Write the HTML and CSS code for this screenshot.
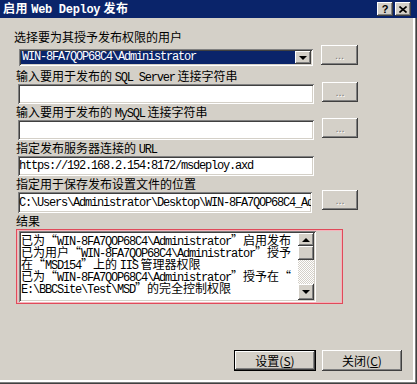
FILE: index.html
```html
<!DOCTYPE html>
<html lang="zh-Hans">

<head>
  <meta charset="UTF-8" />
  <meta name="viewport" content="width=device-width, initial-scale=1.0" />
  <title>启用 Web Deploy 发布</title>
  <link rel="stylesheet" href="styles.css">
</head>

<body>
  <div class="window">
    <div class="titlebar">
      <span class="title">启用 <span class="lat">Web Deploy</span> 发布</span>
      <div class="caption-btns">
        <span class="cap-btn help">?</span>
        <span class="cap-btn close">
          <svg width="8" height="7" viewBox="0 0 8 7"><path d="M0.5 0.5 L7.5 6.5 M7.5 0.5 L0.5 6.5" stroke="#000" stroke-width="1.6" /></svg>
        </span>
      </div>
    </div>

    <div class="content">
      <div class="field first">
        <label>选择要为其授予发布权限的用户</label>
        <div class="combo">
          <span class="combo-text lat">WIN-8FA7QOP68C4\Administrator</span>
          <span class="combo-arrow"><i></i></span>
        </div>
        <button class="browse">...</button>
      </div>

      <div class="field">
        <label>输入要用于发布的 <span class="lat">SQL Server</span> 连接字符串</label>
        <input type="text" class="box" />
        <button class="browse">...</button>
      </div>

      <div class="field">
        <label>输入要用于发布的 <span class="lat">MySQL</span> 连接字符串</label>
        <input type="text" class="box" />
        <button class="browse">...</button>
      </div>

      <div class="field">
        <label>指定发布服务器连接的 <span class="lat">URL</span></label>
        <input type="text" class="box lat" value="https://192.168.2.154:8172/msdeploy.axd" />
      </div>

      <div class="field path">
        <label>指定用于保存发布设置文件的位置</label>
        <input type="text" class="box lat" value="C:\Users\Administrator\Desktop\WIN-8FA7QOP68C4_Administrator.PublishSettings" />
        <button class="browse">...</button>
      </div>

      <div class="field result">
        <label>结果</label>
        <div class="highlight">
          <div class="log">
            <div class="log-lines">
              <div class="line">已为<span class="q qo">“</span><span class="lat">WIN-8FA7QOP68C4\Administrator</span><span class="q qc">”</span>启用发布</div>
              <div class="line">已为用户<span class="q qo">“</span><span class="lat">WIN-8FA7QOP68C4\Administrator</span><span class="q qc">”</span>授予</div>
              <div class="line">在<span class="q qo">“</span><span class="lat">MSD154</span><span class="q qc">”</span>上的 <span class="lat">IIS</span> 管理器权限</div>
              <div class="line">已为<span class="q qo">“</span><span class="lat">WIN-8FA7QOP68C4\Administrator</span><span class="q qc">”</span>授予在<span class="q qo">“</span></div>
              <div class="line"><span class="lat">E:\BBCSite\Test\MSD</span><span class="q qc">”</span>的完全控制权限</div>
            </div>
            <div class="scrollbar">
              <span class="sb-btn up"><i></i></span>
              <span class="sb-thumb"></span>
              <span class="sb-track"></span>
              <span class="sb-btn down"><i></i></span>
            </div>
          </div>
        </div>
      </div>
    </div>

    <div class="footer">
      <button class="action default">设置(<u>S</u>)</button>
      <button class="action">关闭(<u>C</u>)</button>
    </div>
  </div>
</body>

</html>
```

FILE: styles.css
```css
body {
  margin: 0;
  background-color: #d4d0c8;
  font-family: 'Noto Sans CJK SC', sans-serif;
  font-size: 12px;
  color: #000;
}

.lat {
  font-family: 'Liberation Mono', 'Noto Sans CJK SC', monospace;
  font-size: 12px;
  letter-spacing: -1.2px;
}

.window {
  width: 417px;
  height: 384px;
  box-sizing: border-box;
  overflow: hidden;
  box-shadow: inset -1px -1px #404040, inset -2px -2px #808080, inset -4px -4px #fff;
}

/* title bar */
.titlebar {
  height: 18px;
  background-color: #0a246a;
  display: flex;
  align-items: center;
  justify-content: space-between;
  padding: 0 6px 0 3px;
}

.title {
  color: #fff;
  font-weight: bold;
  font-size: 12px;
  line-height: 16px;
  white-space: nowrap;
  letter-spacing: 0.5px;
}

.title .lat {
  font-weight: bold;
  font-size: 12px;
  letter-spacing: -0.3px;
}

.caption-btns {
  display: flex;
  gap: 2px;
}

.cap-btn {
  width: 16px;
  height: 14px;
  box-sizing: border-box;
  background-color: #d4d0c8;
  box-shadow: inset -1px -1px #404040, inset 1px 1px #fff, inset -2px -2px #808080;
  display: flex;
  align-items: center;
  justify-content: center;
  font-family: 'Liberation Sans', sans-serif;
  font-weight: bold;
  font-size: 11px;
  line-height: 14px;
}

/* form */
.content {
  padding-top: 11px;
}

.field {
  display: grid;
  grid-template-columns: 296px 36px;
  column-gap: 8px;
  padding-left: 18px;
}

.field label {
  grid-column: 1 / -1;
  height: 16px;
  line-height: 16px;
  margin-left: -2px;
  white-space: nowrap;
}

.field.first {
  grid-template-columns: 294px 37px;
  padding-left: 19px;
  margin-bottom: 2px;
}

.field.first label {
  margin-left: -5px;
  height: 17px;
}

.box {
  height: 20px;
  box-sizing: border-box;
  border: none;
  margin: 0;
  padding: 0 1px;
  background: #fff;
  color: #000;
  outline: none;
  box-shadow: inset 1px 1px #808080, inset -1px -1px #fff, inset 2px 2px #404040, inset -2px -2px #d4d0c8;
}

.field.path .box {
  height: 21px;
  width: 294px;
}

.browse {
  width: 36px;
  height: 20px;
  margin: -2px 0 0 0;
  padding: 0;
  border: none;
  background-color: #d4d0c8;
  box-shadow: inset -1px -1px #404040, inset 1px 1px #fff, inset -2px -2px #808080;
  color: #808080;
  text-shadow: 1px 1px #fff;
  font-family: 'Liberation Sans', sans-serif;
  font-size: 11px;
  line-height: 14px;
}

.field.first .browse {
  width: 37px;
  height: 20px;
  margin-top: -1px;
}

.combo {
  height: 17px;
  margin-top: 3px;
  box-sizing: border-box;
  padding: 2px;
  background: #fff;
  box-shadow: inset 1px 1px #808080, inset -1px -1px #fff, inset 2px 2px #404040, inset -2px -2px #d4d0c8;
  display: flex;
}

.combo-text {
  flex: 1;
  background-color: #0a246a;
  color: #fff;
  line-height: 13px;
  padding-left: 1px;
  white-space: nowrap;
  overflow: hidden;
}

.combo-arrow,
.sb-btn {
  width: 16px;
  box-sizing: border-box;
  background-color: #d4d0c8;
  box-shadow: inset -1px -1px #404040, inset 1px 1px #fff, inset -2px -2px #808080;
  display: flex;
  align-items: center;
  justify-content: center;
}

.combo-arrow i,
.sb-btn.down i {
  border-left: 4px solid transparent;
  border-right: 4px solid transparent;
  border-top: 4px solid #000;
}

.sb-btn.up i {
  border-left: 4px solid transparent;
  border-right: 4px solid transparent;
  border-bottom: 4px solid #000;
}

/* result */
.field.result {
  display: block;
  padding-left: 16px;
}

.field.result label {
  display: block;
  margin-left: 0;
}

.highlight {
  width: 327px;
  height: 75px;
  box-sizing: border-box;
  border: 1px solid #e04a5a;
  box-shadow: inset 0 0 0 1px #f4b4bb;
  padding: 1px 0 0 2px;
}

.log {
  width: 297px;
  height: 71px;
  box-sizing: border-box;
  background: #fff;
  box-shadow: inset 1px 1px #808080, inset -1px -1px #fff, inset 2px 2px #404040, inset -2px -2px #d4d0c8;
  padding: 2px;
  display: flex;
}

.log-lines {
  flex: 1;
  overflow: hidden;
  padding-top: 1px;
}

.line {
  height: 12px;
  line-height: 12px;
  white-space: nowrap;
}

.q {
  display: inline-block;
  width: 12px;
}

.qo {
  text-align: right;
}

.qc {
  text-align: left;
}

.scrollbar {
  width: 16px;
  display: flex;
  flex-direction: column;
}

.sb-btn {
  height: 13px;
}

.sb-btn.down {
  height: 16px;
}

.sb-thumb {
  height: 14px;
  background-color: #d4d0c8;
  box-shadow: inset -1px -1px #404040, inset 1px 1px #fff, inset -2px -2px #808080;
}

.sb-track {
  flex: 1;
  background: repeating-conic-gradient(#fff 0 25%, #d4d0c8 0 50%) 0 0 / 2px 2px;
}

/* footer */
.footer {
  display: flex;
  justify-content: flex-end;
  gap: 6px;
  padding-right: 15px;
  margin-top: 46px;
}

.action {
  width: 80px;
  height: 21px;
  padding: 0;
  border: none;
  background-color: #d4d0c8;
  box-shadow: inset -1px -1px #404040, inset 1px 1px #fff, inset -2px -2px #808080;
  font-family: 'Noto Sans CJK SC', sans-serif;
  font-size: 12px;
  color: #000;
}

.action.default {
  width: 82px;
  box-shadow: inset 0 0 0 1px #000, inset -2px -2px #404040, inset 2px 2px #fff, inset -3px -3px #808080;
}
```
